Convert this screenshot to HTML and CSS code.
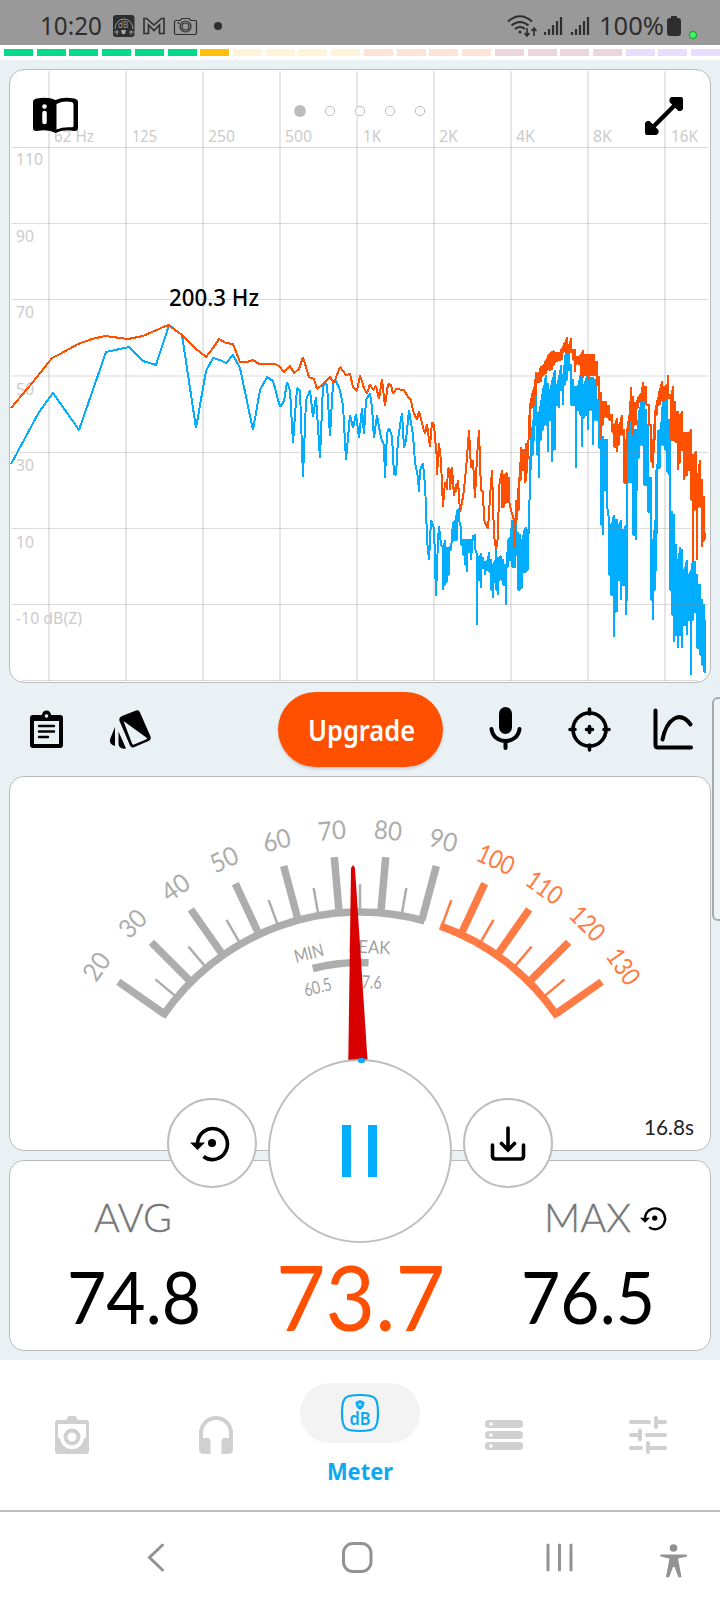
FILE: index.html
```html
<!DOCTYPE html>
<html lang="en">
<head>
    <meta charset="UTF-8">
    <meta name="viewport" content="width=device-width, initial-scale=1">
    <title>Sound meter</title>
    <link rel="stylesheet" href="styles.css">
</head>
<body>

    <header class="status">
        <svg width="720" height="45" viewBox="0 0 720 45">
            <text x="40" y="35" class="status-text" textLength="62" lengthAdjust="spacingAndGlyphs">10:20</text>
            <rect x="113" y="15" width="21.500" height="22" rx="3"/>
            <g fill="none" stroke="#999" stroke-width="1">
                <path d="M115 29a9 10 0 1 1 18 0M114 32h5M129 32h5M117 30v5M131 30v5"/>
            </g>
            <text x="118" y="28" class="tiny">dB</text>
            <path d="M121 30h5l-1 4h-3z" fill="#aaa"/>
            <path d="M144 33.500V18.500h2.500l7.500 6.500 7.500-6.500h2.500v15h-4.500V25L154 30.500 148.500 25v8.500z" fill="none" stroke="#2e2e2e" stroke-width="1.600"/>
            <g fill="none" stroke="#2e2e2e" stroke-width="1.200">
                <path d="M176 20.500h4l2-2h7l2 2h4q1.500 0 1.500 1.500v11q0 1.500-1.500 1.500h-19q-1.500 0-1.500-1.500V22q0-1.500 1.500-1.500z"/>
                <circle cx="185.500" cy="26.500" r="5.500"/><circle cx="185.500" cy="26.500" r="3.500"/>
            </g>
            <circle cx="178.500" cy="23" r="1"/>
            <circle cx="218" cy="26" r="4"/>
            <g fill="none" stroke="#2e2e2e" stroke-width="2">
                <path d="M508 21.500q12-10.500 24 0M511.500 25.500q8.500-7 17 0M515 29q5-4 10 0"/>
                <path d="M527 28v8M524.500 33l2.500 3 2.500-3M534 36v-8M531.500 31l2.500-3 2.500 3" stroke-width="1.600"/>
                <path d="M545 35v-3M549 35v-6M553 35V25M557 35V21M561 35V17M572 35v-3M576 35v-6M580 35V25M584 35V21M588 35V17" stroke-width="2.200"/>
            </g>
            <circle cx="520" cy="32" r="1.500"/>
            <text x="599" y="35" class="status-text" textLength="65" lengthAdjust="spacingAndGlyphs">100%</text>
            <path d="M670 18h1V16h6v2h1q3 0 3 3v12q0 3-3 3h-8q-3 0-3-3V21q0-3 3-3z"/>
            <circle cx="693" cy="35" r="3.600" fill="#3dfb5c" stroke="#1c8f2f"/>
        </svg>
    </header>

    <div class="level">
        <i class="green"></i><i class="green"></i><i class="green"></i><i class="green"></i><i class="green"></i><i class="green"></i>
        <i class="amber"></i>
        <i class="cream"></i><i class="cream"></i><i class="cream"></i><i class="cream"></i>
        <i class="peach"></i><i class="peach"></i><i class="peach"></i><i class="peach"></i>
        <i class="rose"></i><i class="rose"></i><i class="rose"></i><i class="rose"></i>
        <i class="lilac"></i><i class="lilac"></i><i class="lilac"></i>
    </div>

    <main>
        <!-- Spectrum -->
        <section class="card chart">
            <svg width="700" height="612" viewBox="10 70 700 612" id="spectrum">
                <g class="grid-v"><path d="M49 71V681M126 71V681M203 71V681M280 71V681M357 71V681M434 71V681M511 71V681M588 71V681M665 71V681"/></g>
                <g id="freq" class="label"></g>
                <g id="level" class="label"></g>
                <path id="blue" class="trace blue"/>
                <path id="orange" class="trace orange"/>
                <g class="grid-h"><path d="M11 147.500H709M11 223.500H709M11 299.500H709M11 376H709M11 452.500H709M11 528.500H709M11 604.500H709M22 680.500H698"/></g>
                <text x="169" y="305.500" class="peak" textLength="90" lengthAdjust="spacingAndGlyphs">200.3 Hz</text>

                <circle cx="300" cy="111" r="6" fill="#bdbdbd"/>
                <g fill="#fff" stroke="#bdbdbd"><circle cx="330" cy="111" r="4.700"/><circle cx="360" cy="111" r="4.700"/><circle cx="390" cy="111" r="4.700"/><circle cx="420" cy="111" r="4.700"/></g>

                <path d="M33 102q0-3 4-3.500 11-2 18.500 1.500 8-3.500 18.500-1.500 4 .5 4 3.500v26q0 3.500-4 3-11-2-18.500 2-7-4-18.500-2-4 .5-4-3z"/>
                <path d="M56.500 104q7-3.500 15-2 2 .3 2 2v22q0 1.500-2 1.300-8-.8-15 2.200z" fill="#fff"/>
                <circle cx="44.500" cy="106.500" r="2.300" fill="#fff"/>
                <path d="M44.500 113v9" stroke="#fff" stroke-width="4.500" stroke-linecap="round"/>
                <path d="M651 129L677 103" stroke="#000" stroke-width="4.500"/>
                <path d="M671 97h10q2 0 2 2v10l-2 2h-2.500l-9-9v-3zM645 123l2-2h2.500l9 9v3l-2 2h-9.500q-2 0-2-2z"/>
            </svg>
        </section>

        <div class="toolbar">
            <svg width="34" height="40" viewBox="30 710 34 40">
                <path d="M33 715h9a4.500 4.500 0 0 1 9 0h9q3 0 3 3v27q0 3-3 3H33q-3 0-3-3v-27q0-3 3-3z"/>
                <path d="M34 721h25v23H34z" fill="#e9f1f5"/><circle cx="46.500" cy="716" r="1.800" fill="#e9f1f5"/>
                <path d="M39 726h15M39 731.500h15M39 737h9" stroke="#000" stroke-width="2.400" stroke-linecap="round"/>
            </svg>
            <svg class="swatches" width="42" height="42" viewBox="110 709 42 42">
                <path d="M122 716l14-5.500q3-1 4 2l10.500 24q1 3-2 4.500l-14 6q-3 1.500-4.500-1.500L119.500 721q-1-3.500 2.500-5z"/>
                <path d="M123.500 721l23.500 17q0 1-1 1.500l-12 5q-1.500.5-2-1z" fill="#e9f1f5"/>
                <path d="M115 727v19q-7-2-4.500-8zM118.500 731.500l7.500 17q-8 1-7.500-6z"/>
            </svg>
            <button class="upgrade"><svg width="112" height="36"><text x="3" y="28.500" textLength="107" lengthAdjust="spacingAndGlyphs">Upgrade</text></svg></button>
            <svg class="mic" width="32" height="44" viewBox="490 706 32 44">
                <rect x="499" y="707" width="13" height="27" rx="6.500"/>
                <path d="M491.500 729c2 16 26 16 28 0M505.500 741v7" fill="none" stroke="#000" stroke-width="4" stroke-linecap="round"/>
            </svg>
            <svg class="cross" width="44" height="46" viewBox="568 707 44 46">
                <circle cx="589.500" cy="729.500" r="16.500" fill="none" stroke="#000" stroke-width="3.600"/>
                <path d="M589.500 709v5M589.500 745v5M570 729.500h5M604 729.500h5M586.500 729.500h6M589.500 726.500v6" stroke="#000" stroke-width="3.600" stroke-linecap="round"/>
            </svg>
            <svg class="curve" width="42" height="44" viewBox="653 707 42 44">
                <path d="M655.500 710.500V745q0 2.500 2.500 2.500h33M662.500 739.500c4-20 17-30 28-15" fill="none" stroke="#000" stroke-width="4" stroke-linecap="round"/>
            </svg>
        </div>

        <!-- Gauge -->
        <section class="card gauge">
            <svg width="700" height="373" viewBox="10 777 700 373">
                <g id="dial"></g>
                <path d="M351 868l2-3 2 3L367.500 1060H348.300z" fill="#d80000"/>
                <text x="644" y="1135" class="time" textLength="50" lengthAdjust="spacingAndGlyphs">16.8s</text>
            </svg>
        </section>

        <section class="card readings">
            <div class="side">
                <svg width="130" height="118">
                    <text x="24" y="29" class="name" textLength="78" lengthAdjust="spacingAndGlyphs">AVG</text>
                    <text x="-3" y="121" class="value" textLength="134" lengthAdjust="spacingAndGlyphs">74.8</text>
                </svg>
            </div>
            <svg class="now" width="170" height="80"><text x="-1" y="74" textLength="169" lengthAdjust="spacingAndGlyphs">73.7</text></svg>
            <div class="side">
                <svg width="143" height="118">
                    <text x="21" y="29" class="name" textLength="87" lengthAdjust="spacingAndGlyphs">MAX</text>
                    <text x="-2" y="121" class="value" textLength="134" lengthAdjust="spacingAndGlyphs">76.5</text>
                    <use href="#reset" transform="translate(117 3) scale(.67)"/>
                </svg>
            </div>
        </section>

        <div class="controls">
            <button class="round">
                <svg width="44" height="36" viewBox="0 0 44 36">
                    <g id="reset">
                        <path d="M7.500 18a15 15.500 0 1 1 6 13.500" fill="none" stroke="#000" stroke-width="3.600"/>
                        <path d="M0 17.500h15L7.500 25z"/><circle cx="22" cy="18" r="4"/>
                    </g>
                </svg>
            </button>
            <button class="round pause"><i></i><i></i></button>
            <button class="round">
                <svg width="36" height="36" viewBox="0 0 36 36">
                    <path d="M2.500 20v11q0 3 3 3h25q3 0 3-3V20M18 3v21M11.500 18.500L18 25l6.500-6.500" fill="none" stroke="#000" stroke-width="3.600" stroke-linecap="round"/>
                </svg>
            </button>
        </div>
        <div class="drawer"></div>
    </main>

    <nav class="tabs">
        <a><svg width="34" height="38" viewBox="0 0 34 38">
            <path d="M3 4h8l2.500-4h7L23 4h8q3 0 3 3v28q0 3-3 3H3q-3 0-3-3V7q0-3 3-3z"/>
            <path d="M3 8h28v14h-2.500a12 12 0 0 1-23 0H3z" fill="#fff"/>
            <circle cx="17" cy="21" r="12" fill="#fff"/><circle cx="17" cy="21" r="6.500" fill="none" stroke="#d0d0d0" stroke-width="4"/>
        </svg></a>
        <a><svg width="34" height="38" viewBox="0 0 34 38">
            <path d="M2 27V17a15 15 0 0 1 30 0v10" fill="none" stroke="#d0d0d0" stroke-width="4"/>
            <path d="M0 22h8q3.500 0 3.500 3.500V38H5q-5 0-5-5zM34 22h-8q-3.500 0-3.500 3.500V38H29q5 0 5-5z"/>
        </svg></a>
        <a class="active">
            <span class="pill"><svg width="40" height="40" viewBox="0 0 40 40">
                <path d="M20 2C35 2 38 4 38 20S35 38 20 38 2 36 2 20 5 2 20 2z" fill="none" stroke="#0ca8f2" stroke-width="2.200"/>
                <path d="M15.500 9L20 7l4.500 2q0 5.500-4.500 8-4.500-2.500-4.500-8z"/>
                <path d="M18.500 10l3 3M21.500 10l-3 3" stroke="#f3f3f3"/>
                <text x="9.500" y="32" textLength="21" lengthAdjust="spacingAndGlyphs">dB</text>
            </svg></span>
            <svg class="caption" width="66" height="26"><text x="0" y="20" textLength="66" lengthAdjust="spacingAndGlyphs">Meter</text></svg>
        </a>
        <a><svg width="38" height="38" viewBox="0 0 38 38">
            <rect y="4" width="38" height="8" rx="3.500"/><rect y="15" width="38" height="8" rx="3.500"/><rect y="26" width="38" height="8" rx="3.500"/>
            <g fill="#fff"><circle cx="6" cy="8" r="1.700"/><circle cx="6" cy="19" r="1.700"/><circle cx="6" cy="30" r="1.700"/></g>
        </svg></a>
        <a><svg width="38" height="38" viewBox="0 0 38 38">
            <path d="M2 6h18M29 6h7M27 2v9M2 19h7M18 19h18M11 14.500v9M2 32h10M21 32h15M19 27v9" stroke="#d0d0d0" stroke-width="4" stroke-linecap="round"/>
        </svg></a>
    </nav>

    <footer class="system">
        <svg width="720" height="88" viewBox="0 1512 720 88">
            <g fill="none" stroke="#929292" stroke-width="3" stroke-linecap="round">
                <path d="M162.500 1545l-13 12.500 13 12.500"/>
                <rect x="343.500" y="1543.500" width="27.500" height="28" rx="9.500"/>
                <path d="M548 1545v25M559.500 1545v25M571 1545v25"/>
            </g>
            <g fill="#929292">
                <circle cx="673.500" cy="1548" r="3.800"/>
                <path d="M661 1554.500h25q1.500 0 1 2l-9 2 3.500 18.500-3 .5-4-10.500h-1.500l-4 10.500-3-.5 3.500-18.500-9-2q-1-2 .5-2z"/>
            </g>
        </svg>
    </footer>

    <script src="script.js"></script>
</body>
</html>
```
FILE: styles.css
```css
* {box-sizing: border-box}
body {
    margin: 0;
    width: 720px;
    height: 1600px;
    overflow: hidden;
    background-color: #fff;
    font-family: "Noto Sans", sans-serif;
}
svg {display: block; overflow: visible}
button {border: 0; padding: 0; background: none}

/* ----- Status bar ----- */

.status {height: 45px; background-color: #999; fill: #2e2e2e}
.status-text {font: 26px "Noto Sans", sans-serif}
.tiny {font: 8px "Noto Sans", sans-serif; fill: #999}

.level {
    display: flex;
    gap: 3.730px;
    height: 15px;
    padding: 4px 0 0 4px;
    overflow: hidden;
}
.level i {flex: 0 0 29px; height: 7px}
.green {background-color: #00dc8b}
.amber {background-color: #ffc107}
.cream {background-color: #fff3d9}
.peach {background-color: #ffe3d6}
.rose {background-color: #ecd6dd}
.lilac {background-color: #e9ddff}

/* ----- Cards ----- */

main {
    position: relative;
    height: 1300px;
    padding: 9px 9px 0;
    background-color: #e9f1f5;
    overflow: hidden;
}
.card {
    border: 1px solid #bbb;
    border-radius: 15px;
    background-color: #fff;
}
.chart {height: 614px}
.gauge {height: 375px}
.readings {
    height: 191px;
    margin-top: 9px;
    padding: 42px 44px 0 60px;
    display: flex;
    justify-content: space-between;
}

/* ----- Spectrum ----- */

.grid-v path {stroke: #e6e6e6; stroke-width: 2}
.grid-h path {stroke: #888; stroke-opacity: .3; stroke-width: 1.200}
.label {font-size: 16.500px; fill: #cbcbcb}
.peak {font-size: 23px; font-weight: 500}
.trace {fill: none; stroke-width: 2; stroke-linejoin: bevel; shape-rendering: crispEdges}
.blue {stroke: #00adff}
.orange {stroke: #ff4f00}

/* ----- Toolbar ----- */

.toolbar {
    height: 93px;
    padding: 9px 16px 0 21px;
    display: flex;
    align-items: flex-start;
}
.toolbar > svg {margin-top: 18px}
.toolbar .swatches {margin-left: 46px; margin-top: 17px}
.toolbar .mic {margin-left: 47px; margin-top: 14px}
.toolbar .cross {margin-left: 46px; margin-top: 15px}
.toolbar .curve {margin-left: 41px; margin-top: 15px}
.upgrade {
    width: 165px;
    height: 75px;
    margin-left: 126px;
    border-radius: 38px;
    background-color: #ff4f00;
    box-shadow: 0 2px 3px rgba(0, 0, 0, .15);
    display: flex;
    align-items: center;
    justify-content: center;
    fill: #fff;
    font: 600 29px "Noto Sans", sans-serif;
}

/* ----- Gauge ----- */

.num {font: 26px Lato, sans-serif; text-anchor: middle}
.small {font: 18px Lato, sans-serif; text-anchor: middle; fill: #a0a0a0}
.time {font: 21.500px Lato, sans-serif; fill: #222}

.controls {
    position: absolute;
    top: 999px;
    left: 167px;
    width: 386px;
    display: flex;
    align-items: center;
    justify-content: space-between;
}
.round {
    width: 90px;
    height: 90px;
    margin-bottom: 16px;
    border: 2px solid #bebebe;
    border-radius: 50%;
    background-color: #fff;
    display: flex;
    align-items: center;
    justify-content: center;
}
.pause {width: 184px; height: 184px; margin: 0; padding-right: 1px; gap: 17px; position: relative}
.pause i {width: 9px; height: 52px; background-color: #00adff}
.pause::before {
    content: "";
    position: absolute;
    top: -3px;
    left: 88px;
    width: 7px;
    height: 5px;
    border-radius: 2px;
    background-color: #1ba8f3;
}

.drawer {
    position: absolute;
    top: 637px;
    right: -4px;
    width: 12px;
    height: 224px;
    border: 2px solid #aaa;
    border-radius: 8px;
    background-color: #eff4f7;
}

/* ----- Readings ----- */

.name {font: 300 39px Lato, sans-serif; fill: #777; stroke: #777; stroke-width: .4}
.value {font: 71px Lato, sans-serif}
.now {margin-top: 54px; fill: #ff4f00; font: 92px Lato, sans-serif}

/* ----- Tabs ----- */

.tabs {
    height: 152px;
    border-bottom: 2px solid #bebebe;
    display: flex;
    fill: #d0d0d0;
}
.tabs a {
    flex: 1;
    padding-top: 56px;
    display: flex;
    flex-direction: column;
    align-items: center;
}
.tabs .active {padding-top: 23px; fill: #0ca8f2}
.pill {
    width: 120px;
    height: 60px;
    border-radius: 30px;
    background-color: #f3f3f3;
    display: flex;
    align-items: center;
    justify-content: center;
    font-size: 18px;
    font-weight: 600;
}
.caption {margin-top: 17px; font-size: 23px; font-weight: 700}
```
FILE: script.js
```js
const NS = "http://www.w3.org/2000/svg";

function add(parent, tag, attrs, text) {
    const el = document.createElementNS(NS, tag);
    for (const key in attrs) {
        el.setAttribute(key, attrs[key]);
    }
    if (text !== undefined) { el.textContent = text; }
    parent.appendChild(el);
}

// ==================== Spectrum ====================

const freq = document.getElementById("freq");
const level = document.getElementById("level");

[["62 Hz", 54, 40], ["125", 132, 25], ["250", 208, 27], ["500", 285, 27], ["1K", 363, 18], ["2K", 439, 19], ["4K", 516, 19], ["8K", 593, 19], ["16K", 671, 27]].forEach(function (f) {
    add(freq, "text", {x: f[1], y: 142, textLength: f[2], lengthAdjust: "spacingAndGlyphs"}, f[0]);
});
[["110", 27], ["90", 18], ["70", 18], ["50", 18], ["30", 18], ["10", 18], ["-10 dB(Z)", 66]].forEach(function (l, i) {
    add(level, "text", {x: 16, y: 165 + i * 76.5, textLength: l[1], lengthAdjust: "spacingAndGlyphs"}, l[0]);
});

// [x, y] is one point, [x, high, low] is a spike
const orange = [
    [11,408],[33,382],[52,358],[60,354],[78,344],[92,339],[105,336],[128,339],[143,336],[168,325],[182,335],[195,348],[206,357],[213,348],[219,339],[226,343],[233,344],[240,362],[247,362],[253,360],[259,364],[275,364],[279,366],[284,372],[290,366],[294,373],[299,369],[303,357],[309,377],[314,379],[317,389],[323,384],[330,377],[334,383],[340,367],[346,375],[350,374],[353,387],[357,391],
    [360,375],[364,388],[367,394],[370,384],[373,390],[376,386],[379,399],[382,379],[385,406],[388,384],[391,385],[393,394],[396,389],[404,390],[408,397],[411,400],[413,411],[417,420],[419,411],[423,427],[425,434],[427,424],[430,447],[432,422],[434,425],
    [437,460,475],[439,443],[441,462],[443,507],[445,482],[447,490],[448,468],[450,470,490],[452,467],[454,496],[456,484,492],[458,480],[460,512],[463,497],[465,480],[467,457],[469,430],[471,468],[473,460],[475,498],[477,457],[479,430],[481,490],[483,492],[484,520],[488,529],[490,497],[492,470],[494,535],[496,550],[498,537],[499,487],
    [502,470,508],[504,475,507],[507,473,503],[509,478,500],[511,510],[514,520,548],[517,500,520],[519,477,510],[521,447,480],[523,450,470],[525,450,483],[526,443,480],[528,453],[530,403,437],[532,393,408],[534,387,405],[536,372,395],[538,374,382],[541,366,382],[543,366,376],[546,360,374],[549,354,370],[552,352,370],[554,351,365],[557,353,362],[559,353,360],[562,348,360],[565,342,352],[567,337,352],[569,345,354],[571,338,352],[573,350,360],[575,350,372],[578,357,364],[581,355,376],[583,350,378],[585,355,375],[588,355,380],[590,355,376],[592,355,375],[594,355,375],[597,362,385],[599,377,400],[601,393,440],[603,402,425],[606,402,417],[609,406,420],[612,415,432],[614,425,447],[617,418,452],[619,425,445],[622,415,435],[624,430,483],[626,440,483],[627,428,450],[629,415,430],[631,387,420],[633,397,435],[636,403,425],[638,397,408],[641,393,402],[643,382,400],[646,387,405],[649,405,425],[651,425,462],[653,440,468],[655,410,440],[657,400,415],[660,388,405],[662,381,400],[664,387,400],[667,385,400],[668,375,398],[671,395,440],[673,386,440],[675,402,442],[678,412,470],[680,415,463],[682,411,450],[684,433,480],[687,433,476],[689,433,470],[691,429,500],[693,455,562],[696,451,510],[697,478,560],[700,460,507],[702,480,547],[704,497,541],[705,533,538]
];
const blue = [
    [11,464],[39,412],[53,393],[79,430],[106,352],[129,347],[143,361],[156,365],[169,325],[182,335],[196,428],[206,371],[213,358],[220,360],[226,363],[233,355],[240,368],[253,430],[260,390],[267,377],[273,381],[280,407],[284,401],[287,382],[290,390],[293,443],[297,388],[300,391],[303,477],[306,400],[310,390],[313,417],[316,397],[320,458],[323,385],[327,384],[330,436],[333,383],[336,381],[340,390],[343,405],[346,460],[350,415],[353,428],[356,414],[359,438],
    [362,408],[364,434],[366,400],[370,393],[372,407],[374,438],[377,415],[381,438],[384,445],[385,478],[387,433],[389,428],[392,436],[394,474],[396,475],[398,440],[400,425],[402,413],[404,448],[406,440],[409,410],[411,423],[413,435],[415,462],[418,478],[419,492],[420,470],[423,463],[425,485],[426,507],[427,540],[429,560],[431,520],[434,528],[435,560],[436,596],[438,540],[439,526],[441,545],
    [443,547,590],[445,540,585],[447,548,582],[449,548,575],[451,545,550],[453,522,540],[455,520,540],[457,510,540],[459,508,520],[461,528,545],[463,540,555],[465,540,565],[467,540,572],[469,540,552],[471,540,560],[473,535,540],[475,535,548],[477,555,625],[479,557,580],[481,553,588],[483,558,568],[485,562,575],[487,560,570],[489,552,572],[491,560,590],[493,565,598],[495,560,582],[496,545,590],[498,558,595],[501,556,580],[503,560,585],[506,565,605],[508,540,567],[510,537,560],[512,520,567],[515,530,568],[516,500,555],[518,533,590],[520,535,590],[522,540,588],[524,530,572],[526,527,572],[528,530,570],[529,500,522],
    [531,435,470],[533,420,455],[534,400,440],[536,392,425],[537,412,455],[539,412,478],[541,400,440],[543,388,430],[546,375,425],[548,384,452],[550,390,420],[552,380,462],[555,370,450],[557,385,405],[559,375,408],[561,365,390],[563,375,405],[565,355,385],[567,350,380],[569,350,370],[571,365,405],[573,380,405],[576,387,468],[578,385,410],[580,375,415],[582,372,447],[584,385,418],[586,378,415],[588,372,430],[591,378,410],[593,378,445],[596,380,420],[599,400,448],[601,410,525],[603,437,535],[605,440,490],[607,440,505],[609,520,575],[611,525,595],[614,515,637],[617,520,612],[619,525,580],[621,520,600],[623,530,585],[626,525,615],[627,430,600],[629,430,482],[631,420,482],[633,425,535],[636,430,540],[637,430,490],[639,410,458],[642,400,445],[644,398,485],[646,410,485],[648,425,512],[651,478,600],[653,540,620],[655,520,590],[656,470,570],[658,430,468],[660,430,468],[663,400,445],[665,400,450],[667,400,472],[669,420,475],[670,425,590],[672,512,615],[674,515,642],[676,545,635],[678,560,648],[680,547,635],[682,550,648],[684,570,625],[687,560,635],[689,575,620],[691,570,675],[693,557,620],[695,562,612],[697,575,648],[700,585,655],[702,600,665],[704,605,672],[705,620,672]
];

function trace(id, data) {
    let d = "";
    data.forEach(function (p, i) {
        d += (i ? "L" : "M") + p[0] + " " + p[1];
        if (p.length === 3) {
            d += "V" + p[2];
            // come back up next to it, so close spikes merge into a solid band
            const next = data[i + 1];
            if (next && next.length === 3) {
                const low = Math.min(p[2], next[2]);
                const high = Math.max(p[1], next[1]);
                if (high < low) { d += "V" + low + "h1V" + high; }
            }
        }
    });
    document.getElementById(id).setAttribute("d", d);
}
trace("orange", orange);
trace("blue", blue);

// ==================== Gauge ====================

const dial = document.getElementById("dial");
const cx = 360, cy = 1151, r = 239;

function point(deg, radius) {
    const a = deg * Math.PI / 180;
    return (cx + radius * Math.sin(a)).toFixed(2) + " " + (cy - radius * Math.cos(a)).toFixed(2);
}
function arc(from, to, radius, color) {
    add(dial, "path", {d: "M" + point(from, radius) + "A" + radius + " " + radius + " 0 0 1 " + point(to, radius), fill: "none", stroke: color, "stroke-width": 7.5});
}
function turned(deg, radius, cls, text, width, color) {
    const attrs = {class: cls, x: cx, y: cy - radius, textLength: width, lengthAdjust: "spacingAndGlyphs", transform: "rotate(" + deg + " " + cx + " " + cy + ")"};
    if (color) { attrs.fill = color; }
    add(dial, "text", attrs, text);
}

arc(-55.8, 15.7, r, "#adadad");
arc(19.6, 55.8, r, "#ff7b43");
for (let db = 20; db <= 130; db += 5) {
    const deg = db - 75;
    const color = db > 90 ? "#ff7b43" : "#adadad";
    const major = db % 10 === 0;
    add(dial, "path", {d: "M" + point(deg, r) + "L" + point(deg, major ? 295 : 267), stroke: color, "stroke-width": major ? 7.5 : 2.5});
    if (major) {
        turned(deg, 312.5, "num", db, db > 90 ? 38 : 28, color);
    }
}
arc(-14.5, 2.6, 188.5, "#adadad");
turned(-14.5, 198, "small", "MIN", 30);
turned(2.6, 198, "small", "PEAK", 42);
turned(-14.5, 163, "small", "60.5", 28);
turned(2.6, 163, "small", "77.6", 28);
```
